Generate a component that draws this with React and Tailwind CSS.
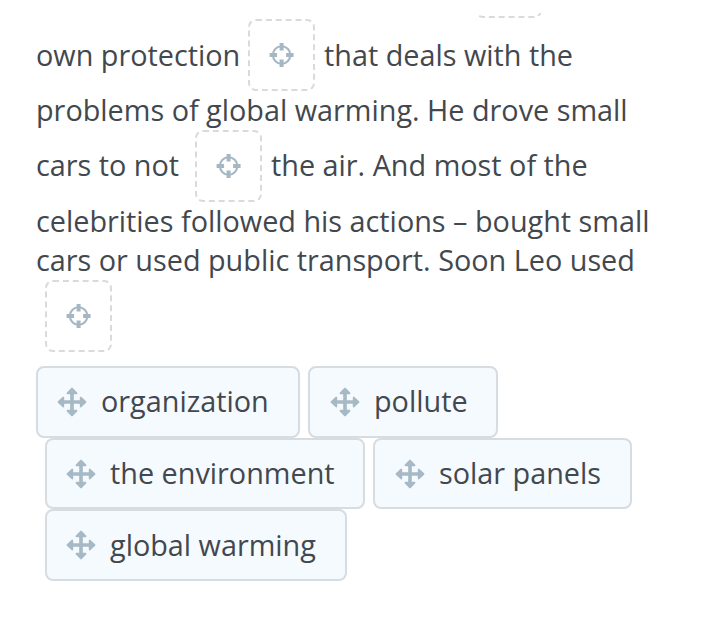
import React from "react";

const chipRows = [
  { className: "ml-0", words: [
    { text: "organization", width: "w-[264px]" },
    { text: "pollute", width: "w-[190px]" },
  ] },
  { className: "ml-[9px]", words: [
    { text: "the environment", width: "w-[320px]" },
    { text: "solar panels", width: "w-[259px]" },
  ] },
  { className: "ml-[9px]", words: [
    { text: "global warming", width: "w-[302px]" },
  ] },
];

function TargetIcon() {
  return (
    <svg width="26" height="26" viewBox="0 0 26 26" fill="none" stroke="#a6b7c4">
      <circle cx="12.6" cy="13" r="8.7" strokeWidth="2.1" />
      <path d="M12.6 1v7.5M12.6 17.5V25M.6 13h7.5M17.1 13h7.5" strokeWidth="4" />
    </svg>
  );
}

function MoveIcon() {
  return (
    <svg width="30" height="30" viewBox="0 0 30 30" fill="#a6b9c5" stroke="#a6b9c5" strokeLinejoin="round">
      <path d="M15 5v20M5 15h20" fill="none" strokeWidth="3.6" />
      <path
        d="M15 1.6l4.4 4.6h-8.8zM15 28.4l4.4-4.6h-8.8zM1.6 15l4.6-4.4v8.8zM28.4 15l-4.6-4.4v8.8z"
        strokeWidth="2"
      />
    </svg>
  );
}

function Slot({ className = "" }) {
  return (
    <span
      className={`flex h-[72px] w-[67px] shrink-0 items-center justify-center rounded-lg border-2 border-dashed border-[#d8dbdd] ${className}`}
    >
      <TargetIcon />
    </span>
  );
}

function Chip({ text, width }) {
  return (
    <button
      type="button"
      className={`flex h-full shrink-0 items-center rounded-lg border-2 border-[#d6dce0] bg-[#f5faff] pl-5 first:pl-[19px] ${width}`}
    >
      <MoveIcon />
      <span className="ml-3.5 pb-0.5 whitespace-nowrap">{text}</span>
    </button>
  );
}

export default function App() {
  return (
    <main className="h-[618px] w-[707px] overflow-hidden bg-white pt-[13px] pl-9 font-['Open_Sans',sans-serif] text-[28.8px] leading-[39px] text-[#42484e]">
      {/* Passage with gaps */}
      <div className="flex h-1.5 flex-col justify-end overflow-hidden">
        <Slot className="mb-px ml-[439px]" />
      </div>
      <div className="flex h-[72px] items-center whitespace-nowrap">
        <span className="w-[212px] pb-0.5">own protection</span>
        <Slot />
        <span className="ml-[9px] pb-0.5">that deals with the</span>
      </div>
      <p className="h-[39px] leading-[37px] whitespace-nowrap">
        problems of global warming. He drove small
      </p>
      <div className="flex h-[72px] items-center whitespace-nowrap">
        <span className="w-[159px] pb-[3px]">cars to not</span>
        <Slot />
        <span className="ml-[9px] pb-[3px]">the air. And most of the</span>
      </div>
      <p className="h-[39px] leading-[37px] whitespace-nowrap">
        celebrities followed his actions – bought small
      </p>
      <p className="h-[39px] leading-[37px] whitespace-nowrap">
        cars or used public transport. Soon Leo used
      </p>
      <Slot className="ml-[9px]" />

      {/* Word bank */}
      <div className="mt-3.5">
        {chipRows.map((row, i) => (
          <div key={i} className={`flex h-[71.7px] gap-2 ${row.className}`}>
            {row.words.map((word) => (
              <Chip key={word.text} {...word} />
            ))}
          </div>
        ))}
      </div>
    </main>
  );
}
